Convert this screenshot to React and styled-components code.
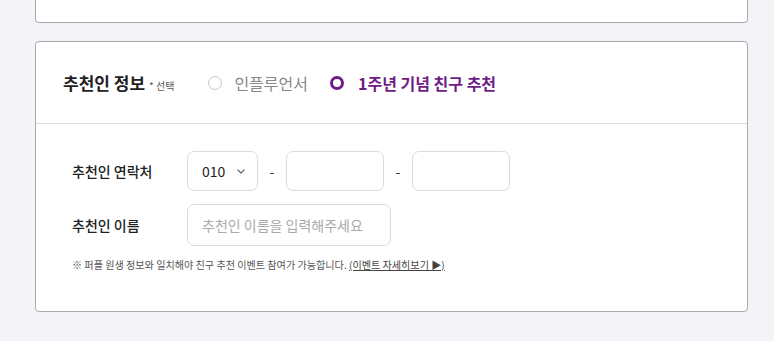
import React from 'react'
import styled, { createGlobalStyle } from 'styled-components'

const GlobalStyle = createGlobalStyle`
  html, body {
    margin: 0;
    padding: 0;
    background: #f3f3f8;
    font-family: 'Noto Sans CJK KR', 'Noto Sans', sans-serif;
    color: #222;
  }
`

const StyledPage = styled.div`
  padding: 0 26px 0 35px;
  display: flex;
  flex-direction: column;
  gap: 18px;
`

const StyledCard = styled.div`
  background: #fff;
  border: 1px solid #aaaab0;
  border-radius: 4px;
`

const StyledTopCard = styled(StyledCard)`
  height: 22px;
  border-top: none;
  border-radius: 0 0 4px 4px;
`

const StyledHeader = styled.div`
  height: 81px;
  padding: 0 27px;
  display: flex;
  align-items: center;
  border-bottom: 1px solid #dedee2;
`

const StyledTitle = styled.h3`
  margin: 0;
  font-size: 17px;
  font-weight: 700;
  color: #222;
  display: flex;
  align-items: baseline;
  gap: 4px;
`

const StyledOptional = styled.span`
  font-size: 10px;
  font-weight: 400;
  color: #555;
`

const StyledRadioGroup = styled.div`
  display: flex;
  align-items: center;
  gap: 22px;
  margin-left: 34px;
`

const StyledRadio = styled.label`
  display: flex;
  align-items: center;
  gap: ${p => (p.checked ? 14 : 12)}px;
  font-size: 16px;
  font-weight: ${p => (p.checked ? 700 : 400)};
  color: ${p => (p.checked ? '#6f1d86' : '#888')};
`

const StyledDot = styled.span`
  box-sizing: border-box;
  width: 14px;
  height: 14px;
  border-radius: 50%;
  border: ${p => (p.checked ? '3.5px solid #6f1d86' : '1px solid #c8c8cc')};
  background: #fff;
`

const StyledBody = styled.div`
  padding: 27px 36px 0;
  height: 160px;
  display: flex;
  flex-direction: column;
`

const StyledRow = styled.div`
  display: flex;
  align-items: center;
  margin-bottom: ${p => p.mb}px;
`

const StyledLabel = styled.div`
  width: 115px;
  font-size: 14px;
  font-weight: 500;
  color: #222;
`

const StyledSelect = styled.div`
  box-sizing: border-box;
  width: 71px;
  height: 40px;
  border: 1px solid #dcdce0;
  border-radius: 7px;
  display: flex;
  align-items: center;
  justify-content: space-between;
  padding: 0 12px 0 14px;
  font-size: 14px;
  color: #222;
`

const StyledDash = styled.span`
  width: 28px;
  text-align: center;
  font-size: 14px;
  color: #333;
`

const StyledInput = styled.input`
  box-sizing: border-box;
  width: ${p => p.w}px;
  height: ${p => p.h || 40}px;
  border: 1px solid #dcdce0;
  border-radius: 7px;
  padding: 0 14px;
  font-family: inherit;
  font-size: 14px;
  color: #222;
  outline: none;
  &::placeholder {
    color: #aaa;
  }
`

const StyledNote = styled.p`
  margin: 0;
  font-size: 10.1px;
  color: #555;
`

const StyledLink = styled.a`
  color: #444;
  text-decoration: underline;
`

const Chevron = () => (
  <svg width="8" height="5" viewBox="0 0 8 5" fill="none">
    <path d="M1 1l3 3 3-3" stroke="#666" strokeWidth="1.2" strokeLinecap="round" strokeLinejoin="round" />
  </svg>
)

export default function App() {
  return (
    <>
      <GlobalStyle />
      <StyledPage>
        <StyledTopCard />
        <StyledCard>
          <StyledHeader>
            <StyledTitle>
              추천인 정보 <StyledOptional>* 선택</StyledOptional>
            </StyledTitle>
            <StyledRadioGroup>
              <StyledRadio>
                <StyledDot />
                인플루언서
              </StyledRadio>
              <StyledRadio checked>
                <StyledDot checked />
                1주년 기념 친구 추천
              </StyledRadio>
            </StyledRadioGroup>
          </StyledHeader>
          <StyledBody>
            <StyledRow mb={13}>
              <StyledLabel>추천인 연락처</StyledLabel>
              <StyledSelect>
                010 <Chevron />
              </StyledSelect>
              <StyledDash>-</StyledDash>
              <StyledInput w={98} />
              <StyledDash>-</StyledDash>
              <StyledInput w={98} />
            </StyledRow>
            <StyledRow mb={11}>
              <StyledLabel>추천인 이름</StyledLabel>
              <StyledInput w={204} h={42} placeholder="추천인 이름을 입력해주세요" />
            </StyledRow>
            <StyledNote>
              ※ 퍼플 원생 정보와 일치해야 친구 추천 이벤트 참여가 가능합니다.{' '}
              <StyledLink>(이벤트 자세히보기 ▶)</StyledLink>
            </StyledNote>
          </StyledBody>
        </StyledCard>
      </StyledPage>
    </>
  )
}
